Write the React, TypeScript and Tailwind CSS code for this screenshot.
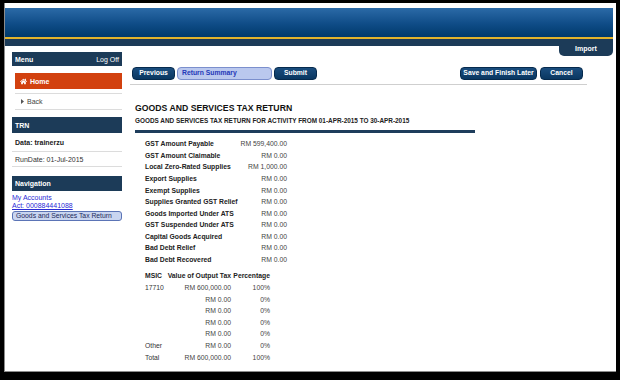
import { FaHome } from 'react-icons/fa';

const font = "font-['Liberation_Sans',Arial,sans-serif]";

const summary: [string, string][] = [
  ['GST Amount Payable', 'RM 599,400.00'],
  ['GST Amount Claimable', 'RM 0.00'],
  ['Local Zero-Rated Supplies', 'RM 1,000.00'],
  ['Export Supplies', 'RM 0.00'],
  ['Exempt Supplies', 'RM 0.00'],
  ['Supplies Granted GST Relief', 'RM 0.00'],
  ['Goods Imported Under ATS', 'RM 0.00'],
  ['GST Suspended Under ATS', 'RM 0.00'],
  ['Capital Goods Acquired', 'RM 0.00'],
  ['Bad Debt Relief', 'RM 0.00'],
  ['Bad Debt Recovered', 'RM 0.00'],
];

const msic: [string, string, string][] = [
  ['17710', 'RM 600,000.00', '100%'],
  ['', 'RM 0.00', '0%'],
  ['', 'RM 0.00', '0%'],
  ['', 'RM 0.00', '0%'],
  ['', 'RM 0.00', '0%'],
  ['Other', 'RM 0.00', '0%'],
  ['Total', 'RM 600,000.00', '100%'],
];

function NavButton({ label, width }: { label: string; width: string }) {
  return (
    <div
      className={`${width} h-[13px] rounded-[4px] border border-[#062a4d] bg-[linear-gradient(to_bottom,#1a4d7e,#0a3761)] flex items-center justify-center text-[6.8px] font-bold leading-none text-white whitespace-nowrap`}
    >
      {label}
    </div>
  );
}

function SideHeader({ label, right, h }: { label: string; right?: string; h: string }) {
  return (
    <div className={`${h} bg-[#1c3b58] flex items-center justify-between px-[3px] text-[7px] leading-none text-white`}>
      <span className="font-bold">{label}</span>
      {right && <span>{right}</span>}
    </div>
  );
}

export default function App() {
  return (
    <div className={`w-[620px] h-[380px] bg-black overflow-hidden ${font}`}>
      <div className="ml-[4px] mt-[3px] w-[612px] h-[369px] bg-white border-l border-b border-[#8c8c8c] pt-[5px] pr-[3px] flex flex-col">
        {/* HEADER */}
        <div className="h-[29px] bg-[linear-gradient(to_bottom,#2b6aa7,#0f4c87_55%,#003a6b)]" />
        <div className="h-[2px] bg-[#e2b42c]" />
        <div className="h-[7px] bg-[#1c3b58] flex justify-end items-start">
          <div className="mt-[1px] w-[54px] h-[16px] shrink-0 rounded-b-[5px] bg-[#1c3b58] flex items-center justify-center text-[7px] font-bold leading-none text-white">
            Import
          </div>
        </div>

        {/* BODY */}
        <div className="flex pt-[6px]">
          {/* SIDEBAR */}
          <div className="ml-[7px] w-[110px] flex flex-col">
            <SideHeader label="Menu" right="Log Off" h="h-[14px]" />
            <div className="mt-[7px] ml-[3px] h-[16px] bg-[#d2410f] flex items-center gap-[3px] pl-[5px] text-[7px] font-bold leading-none text-white">
              <FaHome className="w-[7px] h-[7px]" />
              <span>Home</span>
            </div>
            <div className="ml-[3px] h-[5px] border-b border-[#dcdcdc]" />
            <div className="ml-[3px] h-[16px] border-b border-[#dcdcdc] flex items-center gap-[3px] pl-[6px] text-[7px] leading-none text-[#444]">
              <svg width="3" height="5" viewBox="0 0 3 5">
                <path d="M0 0 L3 2.5 L0 5 Z" fill="#555" />
              </svg>
              <span>Back</span>
            </div>
            <div className="mt-[7px]">
              <SideHeader label="TRN" h="h-[16px]" />
            </div>
            <div className="h-[19px] border-b border-[#dcdcdc] flex items-center pl-[3px] text-[7px] font-bold leading-none text-[#222]">
              Data: trainerzu
            </div>
            <div className="h-[15px] border-b border-[#dcdcdc] flex items-center pl-[3px] text-[7px] leading-none text-[#333]">
              RunDate: 01-Jul-2015
            </div>
            <div className="mt-[9px]">
              <SideHeader label="Navigation" h="h-[15px]" />
            </div>
            <div className="mt-[2px] h-[8px] flex items-center text-[7px] leading-none text-[#2b2bd6]">My Accounts</div>
            <div className="h-[8px] flex items-center text-[7px] leading-none text-[#2b2bd6] underline">Act: 000884441088</div>
            <div className="mt-[2px] h-[10px] rounded-[3px] border border-[#5b74b6] bg-[#c9d5f0] flex items-center pl-[3px] text-[6.8px] leading-none text-[#1c2a5c] whitespace-nowrap">
              Goods and Services Tax Return
            </div>
          </div>

          {/* MAIN */}
          <div className="ml-[8px] w-[457px] flex flex-col">
            <div className="mt-[15px] h-[13px] flex items-center">
              <div className="ml-[2px] flex gap-[2px]">
                <NavButton label="Previous" width="w-[43px]" />
                <div className="w-[95px] h-[13px] rounded-[4px] border border-[#7b8fcd] bg-[#bac8ee] flex items-center pl-[4px] text-[6.8px] font-bold leading-none text-[#2438b8]">
                  Return Summary
                </div>
                <NavButton label="Submit" width="w-[43px]" />
              </div>
              <div className="ml-auto mr-[4px] flex gap-[3px]">
                <NavButton label="Save and Finish Later" width="w-[77px]" />
                <NavButton label="Cancel" width="w-[43px]" />
              </div>
            </div>
            <div className="mt-[4px] h-px bg-[#cfcfcf]" />

            <div className="mt-[18px] ml-[5px] h-[10px] flex items-center text-[8.7px] font-bold leading-none text-[#111]">
              GOODS AND SERVICES TAX RETURN
            </div>
            <div className="mt-[4px] ml-[5px] h-[8px] flex items-center text-[6.4px] font-bold leading-none text-[#222] whitespace-nowrap">
              GOODS AND SERVICES TAX RETURN FOR ACTIVITY FROM 01-APR-2015 TO 30-APR-2015
            </div>
            <div className="mt-[5px] ml-[5px] w-[340px] h-[3px] bg-[#1e3d5c]" />

            {/* SUMMARY TABLE */}
            <div className="mt-[6px] ml-[15px] grid grid-cols-[95px_47px] text-[6.8px] leading-none">
              {summary.map(([label, value]) => (
                <div key={label} className="contents">
                  <div className="h-[11.56px] flex items-center font-bold text-[#222] whitespace-nowrap">{label}</div>
                  <div className="h-[11.56px] flex items-center justify-end text-[#444] whitespace-nowrap">{value}</div>
                </div>
              ))}
            </div>

            {/* MSIC TABLE */}
            <div className="mt-[5px] ml-[15px] grid grid-cols-[21px_65px_39px] text-[6.8px] leading-none">
              <div className="h-[11.6px] flex items-center font-bold text-[#222]">MSIC</div>
              <div className="h-[11.6px] flex items-center justify-end font-bold text-[#222] whitespace-nowrap">Value of Output Tax</div>
              <div className="h-[11.6px] flex items-center justify-end font-bold text-[#222]">Percentage</div>
              {msic.map(([code, value, pct], i) => (
                <div key={i} className="contents">
                  <div className="h-[11.6px] flex items-center text-[#333]">{code}</div>
                  <div className="h-[11.6px] flex items-center justify-end text-[#444] whitespace-nowrap">{value}</div>
                  <div className="h-[11.6px] flex items-center justify-end text-[#444]">{pct}</div>
                </div>
              ))}
            </div>
          </div>
        </div>
      </div>
    </div>
  );
}
